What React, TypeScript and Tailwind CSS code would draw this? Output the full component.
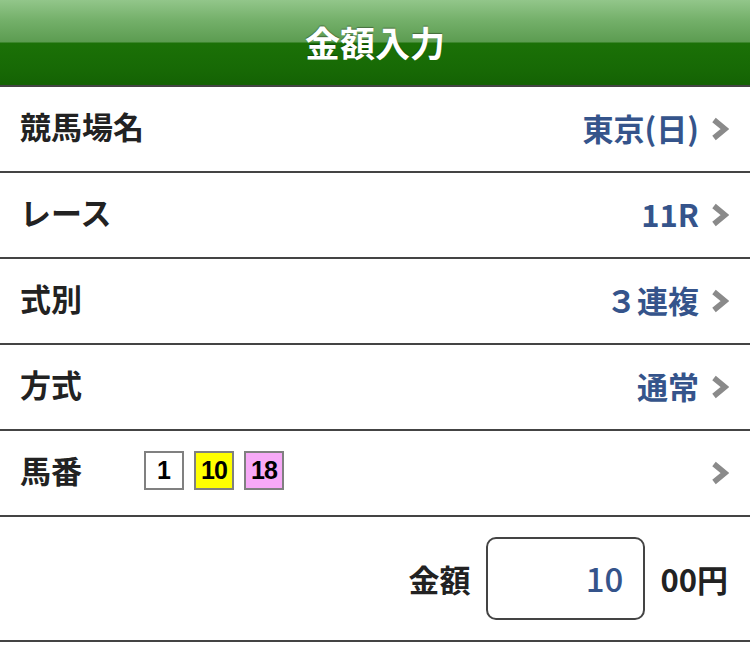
import React from "react";

const font = { fontFamily: '"Noto Sans CJK JP", "Noto Sans", sans-serif' };

function Chevron() {
  return (
    <svg width="18" height="24" viewBox="0 0 18 24" className="shrink-0">
      <path d="M3 3 L14 12 L3 21" fill="none" stroke="#8a8a8a" strokeWidth="5.5" strokeLinecap="butt" strokeLinejoin="miter" />
    </svg>
  );
}

function Row({ label, value }: { label: string; value: string }) {
  return (
    <div className="h-[86px] border-b-2 border-[#444] flex items-center pl-[20px] pr-[21px]">
      <div className="text-[31px] font-bold text-[#222] -mt-[8px] leading-none">{label}</div>
      <div className="ml-auto flex items-center gap-[12px]">
        <div className="text-[31px] font-bold text-[#35548b] -mt-[3px] leading-none">{value}</div>
        <Chevron />
      </div>
    </div>
  );
}

export default function App() {
  return (
    <div className="w-[750px] h-[648px] bg-white overflow-hidden" style={font}>
      <div className="h-[87px] border-b-2 border-[#444] bg-[linear-gradient(to_bottom,#92c68a_0px,#74b06a_20px,#5c9c51_42px,#1b7107_43px,#176905_70px,#146204_85px)] flex items-center justify-center">
        <div className="text-[35px] font-bold text-white leading-none [text-shadow:0_-1px_1px_rgba(0,0,0,0.35)] -mt-[2px]">金額入力</div>
      </div>
      <Row label="競馬場名" value="東京(日)" />
      <Row label="レース" value="11R" />
      <Row label="式別" value="３連複" />
      <Row label="方式" value="通常" />
      <div className="h-[86px] border-b-2 border-[#444] flex items-center pl-[20px] pr-[21px]">
        <div className="text-[31px] font-bold text-[#222] -mt-[8px] leading-none w-[124px]">馬番</div>
        <div className="flex gap-[10px] -mt-[6px]">
          <div className="w-[40px] h-[39px] border-2 border-[#808080] bg-white flex items-center justify-center text-[25px] font-bold text-black leading-none" style={{ fontFamily: '"Liberation Sans", sans-serif' }}>1</div>
          <div className="w-[40px] h-[39px] border-2 border-[#808080] bg-[#ffff00] flex items-center justify-center text-[25px] font-bold text-black leading-none tracking-[-1px]" style={{ fontFamily: '"Liberation Sans", sans-serif' }}>10</div>
          <div className="w-[40px] h-[39px] border-2 border-[#808080] bg-[#f7a9f7] flex items-center justify-center text-[25px] font-bold text-black leading-none tracking-[-1px]" style={{ fontFamily: '"Liberation Sans", sans-serif' }}>18</div>
        </div>
        <div className="ml-auto">
          <Chevron />
        </div>
      </div>
      <div className="h-[125px] border-b-2 border-[#444] flex items-center justify-end pr-[22px]">
        <div className="text-[31px] font-bold text-[#222] leading-none mr-[16px]">金額</div>
        <div className="w-[159px] h-[83px] border-2 border-[#444] rounded-[10px] flex items-center justify-end pr-[20px] mr-[15px]">
          <span className="text-[33px] font-medium text-[#35548b] leading-none">10</span>
        </div>
        <div className="text-[31px] font-bold text-[#222] leading-none">00円</div>
      </div>
    </div>
  );
}
